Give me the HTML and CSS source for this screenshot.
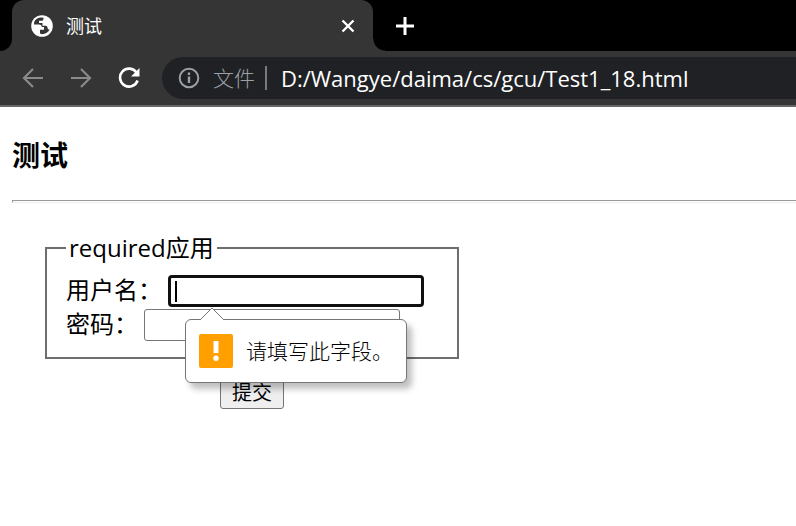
FILE: index.html
```html
<!DOCTYPE html>
<html lang="zh-CN">
<head>
<meta charset="utf-8">
<title>测试</title>
<link rel="stylesheet" href="styles.css">
</head>
<body>
<header class="browser">
  <div class="tabs">
    <div class="tab">
      <svg class="globe" viewBox="0 0 22 22" aria-hidden="true"><circle cx="11" cy="11" r="10.8" fill="#fff"/><path d="M10 2.500C7 2.500 4.500 4 3.200 7L3 9.500H8C9.800 9.500 10.800 10.500 10.800 12H13V14.800H9V18.500L11 19.300C14.500 19.200 17.500 17 18.700 14.500C17.500 14.800 16.500 14 16.500 12.500C16.500 11.300 15.500 10.700 14 10.700H11.500V8H8V5.800H10.500C11.800 5.800 12.500 5 12.500 3.500V2.800Z" fill="#353535"/></svg>
      <span class="tab-title">测试</span>
      <button class="icon-button close" aria-label="关闭"><svg viewBox="0 0 14 14"><path d="M1.500 1.500L12.500 12.500M12.500 1.500L1.500 12.500" fill="none" stroke="#fff" stroke-width="2.400"/></svg></button>
    </div>
    <button class="icon-button add" aria-label="新标签页"><svg viewBox="0 0 18 18"><path d="M9 0V18M0 9H18" fill="none" stroke="#fff" stroke-width="3"/></svg></button>
  </div>
  <nav class="toolbar">
    <button class="icon-button" aria-label="后退"><svg viewBox="0 0 22 22"><path d="M21 11H2M11 2L2 11L11 20" fill="none" stroke="#8a8a8a" stroke-width="2.200"/></svg></button>
    <button class="icon-button" aria-label="前进"><svg viewBox="0 0 22 22"><path d="M1 11H20M11 2L20 11L11 20" fill="none" stroke="#8a8a8a" stroke-width="2.200"/></svg></button>
    <button class="icon-button" aria-label="重新加载"><svg viewBox="0 0 22 22"><path d="M18.500 5.500A9 9 0 1 0 19.600 13.500" fill="none" stroke="#fff" stroke-width="2.600"/><path d="M21.500 1V9.500H13Z" fill="#fff"/></svg></button>
    <div class="address">
      <svg class="info" viewBox="0 0 22 22" aria-hidden="true"><circle cx="11" cy="11" r="9.300" fill="none" stroke="#9aa0a6" stroke-width="2"/><path d="M11 9.500V16M11 5.500V8" stroke="#9aa0a6" stroke-width="2.400"/></svg>
      <span class="scheme">文件</span>
      <span class="divider"></span>
      <span class="url">D:/Wangye/daima/cs/gcu/Test1_18.html</span>
    </div>
  </nav>
</header>
<main class="page">
  <h1>测试</h1>
  <hr>
  <form class="form">
    <fieldset>
      <legend>required应用</legend>
      <div class="row">
        <label for="user">用户名：</label>
        <div class="field focused">
          <input id="user" type="text">
          <div class="bubble" role="alert">
            <svg class="arrow" viewBox="0 0 24 13" aria-hidden="true"><path d="M0 13L12 1L24 13" fill="#fff" stroke="#767676"/></svg>
            <svg class="warning" viewBox="0 0 34 34" aria-hidden="true"><rect width="34" height="34" rx="2" fill="#ffa000"/><path d="M14.500 7H19.500V19H14.500Z" fill="#fff"/><circle cx="17" cy="24.300" r="2.700" fill="#fff"/></svg>
            <span>请填写此字段。</span>
          </div>
        </div>
      </div>
      <div class="row">
        <label for="pass">密码：</label>
        <div class="field"><input id="pass" type="password"></div>
      </div>
    </fieldset>
    <button class="submit" type="submit">提交</button>
  </form>
</main>
</body>
</html>
```
FILE: styles.css
```css
* {
  box-sizing: border-box;
}

body {
  margin: 0;
  background: #fff;
  color: #000;
  font-family: "Open Sans", "Noto Sans CJK SC", sans-serif;
}

svg {
  display: block;
}

.browser {
  background: #353535;
  border-bottom: 2px solid #666;
}

.tabs {
  display: flex;
  align-items: center;
  height: 51px;
  padding-left: 12px;
  background: linear-gradient(#353535, #353535) left bottom / 24px 12px no-repeat, #000;
  position: relative;
}

.tabs::before {
  content: "";
  position: absolute;
  left: 0;
  top: 0;
  width: 12px;
  height: 51px;
  background: #000;
  border-bottom-right-radius: 12px;
}

.tab {
  display: flex;
  align-items: center;
  width: 361px;
  height: 51px;
  padding: 0 18px 0 19px;
  background: #353535;
  border-radius: 12px 12px 0 0;
  position: relative;
}

.tab::after {
  content: "";
  position: absolute;
  left: 100%;
  bottom: 0;
  width: 12px;
  height: 12px;
  background: radial-gradient(circle at 100% 0, #000 11px, #353535 12px);
}

.globe {
  width: 22px;
  height: 22px;
}

.tab-title {
  flex: 1;
  margin-left: 13px;
  color: #fff;
  font-size: 18px;
  line-height: 24px;
}

.icon-button {
  flex: none;
  width: 22px;
  height: 22px;
  padding: 0;
  border: 0;
  background: none;
}

.close {
  width: 14px;
  height: 14px;
}

.add {
  width: 18px;
  height: 18px;
  margin-left: 23px;
}

.toolbar {
  display: flex;
  align-items: center;
  gap: 26px;
  padding: 6px 0 6px 22px;
}

.address {
  display: flex;
  align-items: center;
  flex: 1;
  height: 42px;
  margin-left: -4px;
  padding-left: 16px;
  border-radius: 21px 0 0 21px;
  background: #202124;
  font-size: 22px;
  line-height: 30px;
  white-space: nowrap;
}

.info {
  flex: none;
  width: 22px;
  height: 22px;
}

.scheme {
  margin-left: 13px;
  color: #9aa0a6;
  font-size: 21px;
  font-weight: 300;
}

.divider {
  width: 2px;
  height: 24px;
  margin: 0 14px 0 10px;
  background: #777a7e;
}

.url {
  color: #fff;
}

.page {
  padding: 28px 0 0 12px;
  font-size: 24px;
  line-height: 34px;
}

h1 {
  margin: 3px 0 28px;
  font-size: 28px;
  line-height: 34px;
}

hr {
  height: 3px;
  margin: 0;
  border: 1px solid #999;
  border-right: 0;
  border-bottom-color: #eee;
}

.form {
  width: 414px;
  margin: 28px 0 0 33px;
}

fieldset {
  margin: 0;
  padding: 8px 19px 16px;
  border: 2px solid #6e6e6e;
}

legend {
  padding: 0 3px;
}

.row {
  display: flex;
  align-items: flex-end;
  gap: 6px;
  height: 34px;
}

.field {
  position: relative;
  width: 256px;
  height: 32px;
}

.field input {
  display: block;
  width: 100%;
  height: 100%;
  padding: 2px 6px;
  border: 1px solid #767676;
  border-radius: 3px;
  font: inherit;
  font-size: 20px;
}

.focused input {
  border: 3px solid #101010;
  border-radius: 4px;
  outline: 0;
}

.focused::before {
  content: "";
  position: absolute;
  left: 7px;
  top: 6px;
  width: 2px;
  height: 21px;
  background: #000;
}

.bubble {
  position: absolute;
  z-index: 1;
  left: 17px;
  top: 44px;
  display: flex;
  align-items: center;
  gap: 13px;
  width: 222px;
  height: 64px;
  padding-left: 13px;
  border: 1px solid #767676;
  border-radius: 6px;
  background: #fff;
  box-shadow: 5px 6px 6px rgba(0, 0, 0, 0.25);
  font-size: 21px;
  font-weight: 300;
  white-space: nowrap;
}

.arrow {
  position: absolute;
  left: 14px;
  top: -13px;
  width: 24px;
  height: 13px;
}

.warning {
  flex: none;
  width: 34px;
  height: 34px;
}

.submit {
  display: block;
  height: 32px;
  margin: 18px auto 0;
  padding: 0 11px;
  border: 1px solid #767676;
  border-radius: 3px;
  background: #efefef;
  color: #000;
  font: inherit;
  font-size: 20px;
  line-height: 30px;
}
```
